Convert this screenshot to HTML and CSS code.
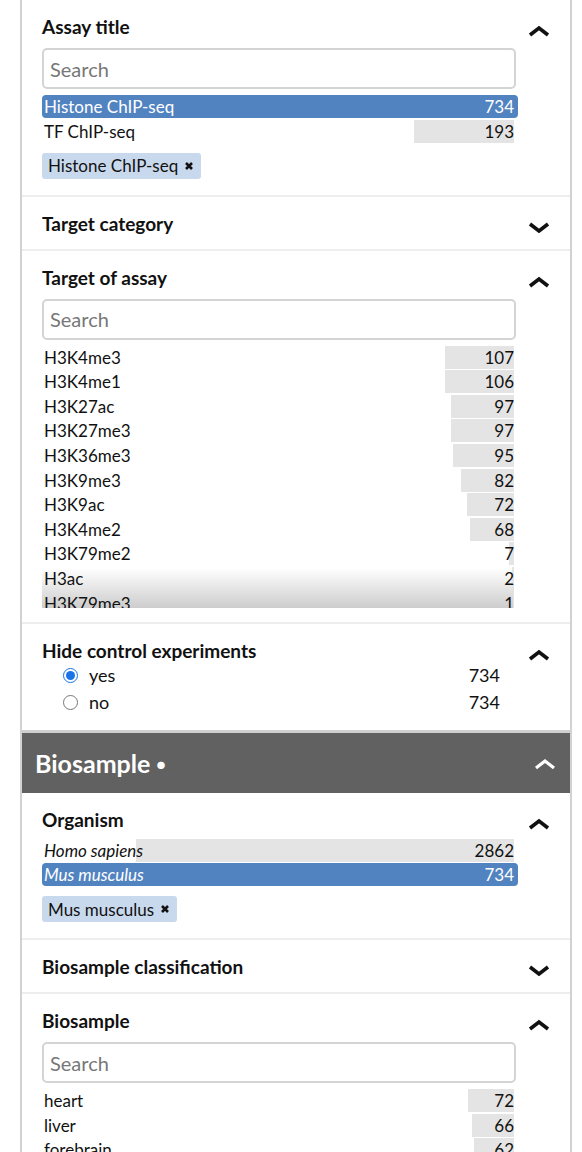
FILE: index.html
```html
<!DOCTYPE html>
<html lang="en">
<head>
<meta charset="utf-8">
<title>Facets</title>
<link rel="stylesheet" href="styles.css">
</head>
<body>
<div class="panel">
  <section class="facet first">
    <div class="facet-head"><h3>Assay title</h3><svg class="chev" viewBox="0 0 22 12"><polyline points="2,10 11,3 20,10"/></svg></div>
    <div class="facet-body">
      <input class="search" type="text" placeholder="Search">
      <ul class="terms">
        <li class="term selected" style="--w:100%"><span>Histone ChIP-seq</span><span>734</span></li>
        <li class="term" style="--w:21.2%"><span>TF ChIP-seq</span><span>193</span></li>
      </ul>
      <div class="chips"><span class="chip">Histone ChIP-seq <svg class="x" viewBox="0 0 10 10"><path d="M2 2L8 8M8 2L2 8"/></svg></span></div>
    </div>
  </section>

  <section class="facet">
    <div class="facet-head"><h3>Target category</h3><svg class="chev down" viewBox="0 0 22 12"><polyline points="2,3 11,10 20,3"/></svg></div>
  </section>

  <section class="facet">
    <div class="facet-head"><h3>Target of assay</h3><svg class="chev" viewBox="0 0 22 12"><polyline points="2,10 11,3 20,10"/></svg></div>
    <div class="facet-body">
      <input class="search" type="text" placeholder="Search">
      <div class="scroll">
        <ul class="terms">
          <li class="term" style="--w:14.7%"><span>H3K4me3</span><span>107</span></li>
          <li class="term" style="--w:14.6%"><span>H3K4me1</span><span>106</span></li>
          <li class="term" style="--w:13.3%"><span>H3K27ac</span><span>97</span></li>
          <li class="term" style="--w:13.3%"><span>H3K27me3</span><span>97</span></li>
          <li class="term" style="--w:13.0%"><span>H3K36me3</span><span>95</span></li>
          <li class="term" style="--w:11.3%"><span>H3K9me3</span><span>82</span></li>
          <li class="term" style="--w:9.9%"><span>H3K9ac</span><span>72</span></li>
          <li class="term" style="--w:9.3%"><span>H3K4me2</span><span>68</span></li>
          <li class="term" style="--w:1%"><span>H3K79me2</span><span>7</span></li>
          <li class="term" style="--w:0.4%"><span>H3ac</span><span>2</span></li>
          <li class="term" style="--w:0.2%"><span>H3K79me3</span><span>1</span></li>
        </ul>
      </div>
    </div>
  </section>

  <section class="facet">
    <div class="facet-head"><h3>Hide control experiments</h3><svg class="chev" viewBox="0 0 22 12"><polyline points="2,10 11,3 20,10"/></svg></div>
    <div class="radios">
      <label class="radio-row"><input type="radio" name="ctl" checked><span class="rlabel">yes</span><span class="rcount">734</span></label>
      <label class="radio-row"><input type="radio" name="ctl"><span class="rlabel">no</span><span class="rcount">734</span></label>
    </div>
  </section>

  <header class="group-head">
    <h2>Biosample <span class="dot">●</span></h2>
    <svg class="chev white" viewBox="0 0 22 12"><polyline points="2,10 11,3 20,10"/></svg>
  </header>

  <section class="facet first">
    <div class="facet-head"><h3>Organism</h3><svg class="chev" viewBox="0 0 22 12"><polyline points="2,10 11,3 20,10"/></svg></div>
    <div class="facet-body">
      <ul class="terms tight">
        <li class="term" style="--w:80%"><span class="it">Homo sapiens</span><span>2862</span></li>
        <li class="term selected" style="--w:100%"><span class="it">Mus musculus</span><span>734</span></li>
      </ul>
      <div class="chips"><span class="chip">Mus musculus <svg class="x" viewBox="0 0 10 10"><path d="M2 2L8 8M8 2L2 8"/></svg></span></div>
    </div>
  </section>

  <section class="facet">
    <div class="facet-head"><h3>Biosample classification</h3><svg class="chev down" viewBox="0 0 22 12"><polyline points="2,3 11,10 20,3"/></svg></div>
  </section>

  <section class="facet">
    <div class="facet-head"><h3>Biosample</h3><svg class="chev" viewBox="0 0 22 12"><polyline points="2,10 11,3 20,10"/></svg></div>
    <div class="facet-body">
      <input class="search" type="text" placeholder="Search">
      <ul class="terms">
        <li class="term" style="--w:9.8%"><span>heart</span><span>72</span></li>
        <li class="term" style="--w:8.9%"><span>liver</span><span>66</span></li>
        <li class="term" style="--w:8.5%"><span>forebrain</span><span>62</span></li>
        <li class="term" style="--w:8%"><span>midbrain</span><span>58</span></li>
      </ul>
    </div>
  </section>
</div>
</body>
</html>
```

FILE: styles.css
```css
html, body {
  margin: 0;
  padding: 0;
  background: #fff;
  height: 1152px;
  overflow: hidden;
}

body {
  font-family: Lato, "Open Sans", "Liberation Sans", sans-serif;
  color: #111;
}

.panel {
  margin-left: 20px;
  width: 548px;
  border-left: 2px solid #d2d2d2;
  border-right: 2px solid #d2d2d2;
  min-height: 1152px;
}

.facet {
  padding: 16px 20px 14px 20px;
  border-top: 2px solid #eeeeee;
}

.facet.first {
  border-top: none;
}

.facet-head {
  display: flex;
  justify-content: space-between;
  align-items: flex-start;
}

.facet-head h3 {
  margin: 0;
  font-size: 19px;
  line-height: 22px;
  font-weight: 700;
  color: #111;
}

.chev {
  width: 22px;
  height: 12px;
  margin-top: 9px;
  fill: none;
  stroke: #111;
  stroke-width: 3.6;
  stroke-linecap: butt;
  stroke-linejoin: miter;
}

.chev.down {
  margin-top: 8px;
}

.chev.white {
  stroke: #fff;
  stroke-width: 3.2;
  margin-top: 2px;
}

.facet-body {
  width: 476px;
  margin-top: 10px;
}

.search {
  display: block;
  box-sizing: border-box;
  width: 474px;
  height: 41px;
  border: 2px solid #d4d4d4;
  border-radius: 5px;
  padding: 0 6px;
  font-family: inherit;
  font-size: 20px;
  color: #333;
  background: #fff;
  outline: none;
}

.search::placeholder {
  color: #777;
}

.terms {
  list-style: none;
  margin: 6px 0 0 0;
  padding: 0;
  width: 472px;
}

.terms.tight {
  margin-top: -2px;
}

.term {
  display: flex;
  justify-content: space-between;
  align-items: center;
  height: 23px;
  margin-bottom: 1.6px;
  padding-left: 2px;
  font-size: 17px;
  color: #111;
  background: linear-gradient(to left, #e4e4e4 var(--w), transparent var(--w));
}

.term.selected {
  background: #5283c1;
  color: #fff;
  border-radius: 4px;
  margin-right: -4px;
  padding-right: 4px;
}

.it {
  font-style: italic;
}

.scroll {
  height: 262px;
  margin-top: 6px;
  overflow: hidden;
  width: 472px;
  background: linear-gradient(to bottom, #fff 0, #fff calc(100% - 40px), #cdcdcd 100%);
}

.scroll .terms {
  margin-top: 0;
}

.chips {
  margin-top: 10px;
  margin-bottom: 2px;
  display: flex;
}

.chip {
  display: inline-flex;
  align-items: center;
  height: 26px;
  padding: 0 7px 0 6px;
  background: #c9d9ed;
  border-radius: 3px;
  font-size: 17px;
  color: #111;
}

.chip .x {
  width: 10px;
  height: 10px;
  margin-left: 6px;
  stroke: #111;
  stroke-width: 2.6;
  fill: none;
}

.radios {
  width: 458px;
}

.radio-row {
  display: flex;
  align-items: center;
  height: 27px;
  padding-left: 21px;
  font-size: 18px;
  color: #111;
}

.radio-row input {
  width: 15px;
  height: 15px;
  margin: 0;
  accent-color: #1a73e8;
}

.rlabel {
  margin-left: 11px;
}

.rcount {
  margin-left: auto;
}

.group-head {
  display: flex;
  justify-content: space-between;
  align-items: center;
  height: 60px;
  padding: 0 14px 0 13px;
  background: #616161;
  border-top: 3px solid #cfcfcf;
}

.group-head h2 {
  margin: 0;
  font-size: 25px;
  font-weight: 700;
  color: #fff;
}

.group-head .dot {
  font-size: 15px;
  vertical-align: middle;
  position: relative;
  top: -2px;
}
```
